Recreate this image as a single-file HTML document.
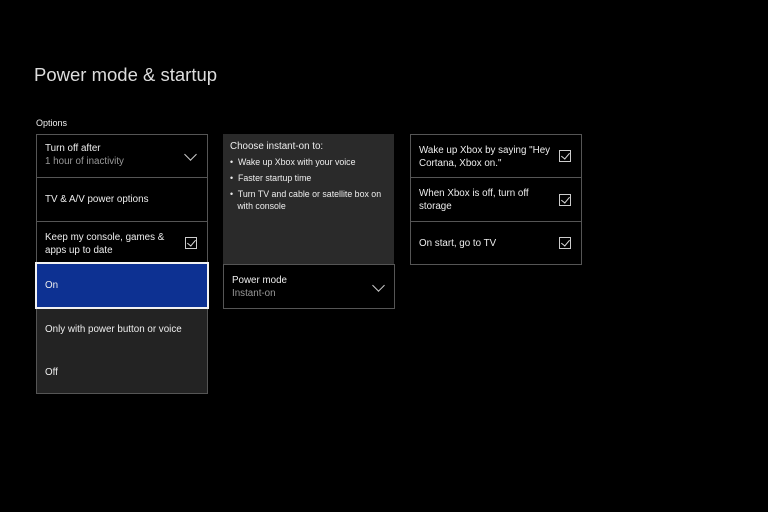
<!DOCTYPE html>
<html><head><style>
body{margin:0;width:768px;height:512px;background:#000;font-family:"Liberation Sans",sans-serif;color:#eee;position:relative;overflow:hidden}
.a{position:absolute;box-sizing:border-box}
.t{font-size:9.8px;line-height:13px}
.s{color:#999}
.row{border:1px solid #555;}
.cb{position:absolute;width:12px;height:12px;border:1px solid #ccc;box-sizing:border-box}
.cb:after{content:"";position:absolute;left:3px;top:0px;width:4px;height:7px;border:solid #ddd;border-width:0 1px 1px 0;transform:rotate(40deg)}
.chev{position:absolute;width:8px;height:8px;border:solid #ccc;border-width:0 1.3px 1.3px 0;transform:rotate(45deg)}
</style></head><body>
<div class="a" style="left:34px;top:64px;font-size:18.5px;color:#ddd">Power mode &amp; startup</div>
<div class="a t" style="left:36px;top:117px;font-size:9px">Options</div>

<div class="a row" style="left:36px;top:134px;width:172px;height:44px"></div>
<div class="a t" style="left:45px;top:142px">Turn off after<br><span class="s">1 hour of inactivity</span></div>
<div class="chev" style="left:186px;top:150px"></div>
<div class="a row" style="left:36px;top:177px;width:172px;height:45px"></div>
<div class="a t" style="left:45px;top:193px">TV &amp; A/V power options</div>
<div class="a row" style="left:36px;top:221px;width:172px;height:44px"></div>
<div class="a t" style="left:45px;top:231px">Keep my console, games &amp;<br>apps up to date</div>
<div class="cb" style="left:185px;top:237px"></div>
<div class="a" style="left:36px;top:308px;width:172px;height:86px;background:#232323;border:1px solid #555;border-top:none"></div>
<div class="a" style="left:35px;top:262px;width:174px;height:47px;background:#0d3192;border:2px solid #f2f2f2"></div>
<div class="a t" style="left:45px;top:279px">On</div>
<div class="a t" style="left:45px;top:323px">Only with power button or voice</div>
<div class="a t" style="left:45px;top:366px">Off</div>

<div class="a" style="left:223px;top:134px;width:171px;height:130px;background:#2a2a2a"></div>
<div class="a t" style="left:230px;top:140px">Choose instant-on to:</div>
<div class="a t" style="left:230px;top:156px;font-size:8.8px;line-height:12px">•&nbsp; Wake up Xbox with your voice</div>
<div class="a t" style="left:230px;top:172px;font-size:8.8px;line-height:12px">•&nbsp; Faster startup time</div>
<div class="a t" style="left:230px;top:188px;font-size:8.8px;line-height:12px">•&nbsp; Turn TV and cable or satellite box on<br>&nbsp;&nbsp;&nbsp;with console</div>
<div class="a row" style="left:223px;top:264px;width:172px;height:45px"></div>
<div class="a t" style="left:232px;top:274px">Power mode<br><span class="s">Instant-on</span></div>
<div class="chev" style="left:374px;top:281px"></div>

<div class="a row" style="left:410px;top:134px;width:172px;height:44px"></div>
<div class="a t" style="left:419px;top:144px">Wake up Xbox by saying "Hey<br>Cortana, Xbox on."</div>
<div class="cb" style="left:559px;top:150px"></div>
<div class="a row" style="left:410px;top:177px;width:172px;height:45px"></div>
<div class="a t" style="left:419px;top:187px">When Xbox is off, turn off<br>storage</div>
<div class="cb" style="left:559px;top:194px"></div>
<div class="a row" style="left:410px;top:221px;width:172px;height:44px"></div>
<div class="a t" style="left:419px;top:237px">On start, go to TV</div>
<div class="cb" style="left:559px;top:237px"></div>
</body></html>
